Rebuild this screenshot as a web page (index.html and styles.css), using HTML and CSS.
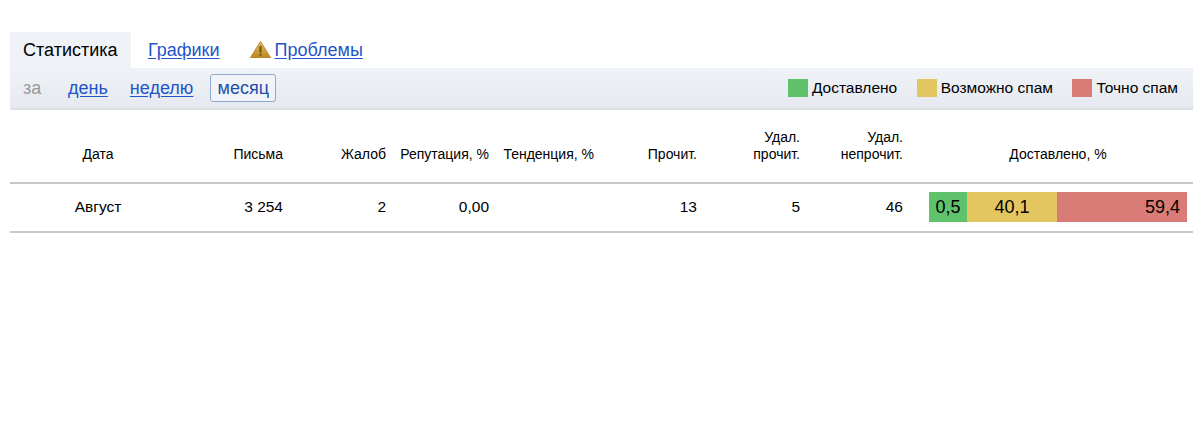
FILE: index.html
```html
<!DOCTYPE html>
<html lang="ru">
<head>
<meta charset="utf-8">
<title>Статистика</title>
<link rel="stylesheet" href="styles.css">
</head>
<body>
<div class="page">
  <nav class="tabs">
    <span class="tab tab-active">Статистика</span>
    <a class="tab link" href="#">Графики</a>
    <span class="tab tab-warn">
      <svg class="warn" width="21" height="18" viewBox="0 0 21 18"><defs><linearGradient id="w" x1="0" y1="0" x2="0" y2="1"><stop offset="0" stop-color="#e8bd5e"/><stop offset="1" stop-color="#b98a25"/></linearGradient></defs><path d="M10.5 0.5 L20.5 16.5 H0.5 Z" fill="url(#w)" stroke="#b8892c" stroke-width="1" stroke-linejoin="round"/><path d="M10.5 5v6.5" stroke="#6f4c10" stroke-width="2"/><path d="M10.5 12.7v2" stroke="#6f4c10" stroke-width="2"/></svg>
      <a class="link" href="#">Проблемы</a>
    </span>
  </nav>
  <div class="bar">
    <div class="periods">
      <span class="for">за</span>
      <a class="link" href="#">день</a>
      <a class="link" href="#">неделю</a>
      <span class="current">месяц</span>
    </div>
    <div class="legend">
      <span class="legend-item"><i class="swatch green"></i>Доставлено</span>
      <span class="legend-item"><i class="swatch yellow"></i>Возможно спам</span>
      <span class="legend-item"><i class="swatch red"></i>Точно спам</span>
    </div>
  </div>
  <table class="stats">
    <colgroup>
      <col class="c-date"><col class="c-let"><col class="c-n"><col class="c-n"><col class="c-tr"><col class="c-n"><col class="c-n"><col class="c-n"><col>
    </colgroup>
    <thead>
      <tr>
        <th class="center">Дата</th>
        <th>Письма</th>
        <th>Жалоб</th>
        <th>Репутация, %</th>
        <th>Тенденция, %</th>
        <th>Прочит.</th>
        <th>Удал.<br>прочит.</th>
        <th>Удал.<br>непрочит.</th>
        <th class="center delivered">Доставлено, %</th>
      </tr>
    </thead>
    <tbody>
      <tr>
        <td class="center">Август</td>
        <td>3 254</td>
        <td>2</td>
        <td>0,00</td>
        <td></td>
        <td>13</td>
        <td>5</td>
        <td>46</td>
        <td class="bar-cell">
          <div class="chart">
            <span class="seg green s1">0,5</span>
            <span class="seg yellow s2">40,1</span>
            <span class="seg red s3">59,4</span>
          </div>
        </td>
      </tr>
    </tbody>
  </table>
</div>
</body>
</html>
```
FILE: styles.css
```css
* { box-sizing: border-box; }
html, body { margin: 0; background: #fff; }
body { font-family: "Liberation Sans", Arial, sans-serif; color: #000; }
.page { padding: 32px 7px 0 10px; }
.link { color: #1f55c9; text-decoration: underline; text-underline-offset: 2px; }

.tabs { display: flex; height: 36px; font-size: 18px; line-height: 36px; }
.tab { padding: 0 13px; }
.tab-active { width: 121px; background: #eff3f8; padding: 0 0 0 13px; }
.tabs > a.tab { margin-left: 4px; padding: 0 13px; }
.tab-warn { display: flex; align-items: center; margin-left: 14px; padding: 0 0 0 3px; }
.warn { margin-right: 4px; }

.bar {
  display: flex; justify-content: space-between; align-items: center;
  height: 42px;
  background: linear-gradient(#eff3f8, #e6eaf0);
  border-bottom: 2px solid #dcdfe3;
  padding: 0 15px 0 13px;
}
.periods { display: flex; align-items: center; font-size: 18px; }
.for { color: #999; width: 45px; }
.periods .link { margin-right: 22px; }
.periods .link + .current { margin-left: -5px; }
.current {
  color: #1f4fa8; width: 66px; height: 28px; line-height: 27px; text-align: center;
  border: 1px solid #8fa9d0; border-radius: 3px; background: #f0f4f9;
}
.legend { display: flex; font-size: 15.5px; gap: 19.5px; }
.legend-item { display: flex; align-items: center; gap: 4px; }
.swatch { display: block; width: 20px; height: 18px; }

.green { background: #61c26c; }
.yellow { background: #e4c661; }
.red { background: #d97c77; }

.stats {
  width: 100%; table-layout: fixed; border-collapse: collapse;
  font-size: 14px;
}
.c-date { width: 176px; }
.c-let { width: 107px; }
.c-n { width: 103px; }
.c-tr { width: 105px; }
.stats th {
  font-weight: 400; text-align: right; vertical-align: bottom; height: 73px;
  padding: 0 10px 19px 0; line-height: 17px;
  border-bottom: 2px solid #c8c8c8; white-space: nowrap;
}
.stats td { text-align: right; font-size: 15.5px; height: 49px; padding: 0 10px 2px 0; border-bottom: 2px solid #c8c8c8; }
.stats .center { text-align: center; padding-right: 0; }
.stats .delivered { padding-left: 16px; padding-right: 6px; }
.stats .bar-cell { padding: 0 6px 2px 16px; }
.chart { display: flex; height: 30px; font-size: 18px; line-height: 30px; }
.seg { display: block; text-align: center; }
.s1 { width: 38px; }
.s2 { width: 90px; }
.s3 { flex: 1; text-align: right; padding-right: 7px; }
```
